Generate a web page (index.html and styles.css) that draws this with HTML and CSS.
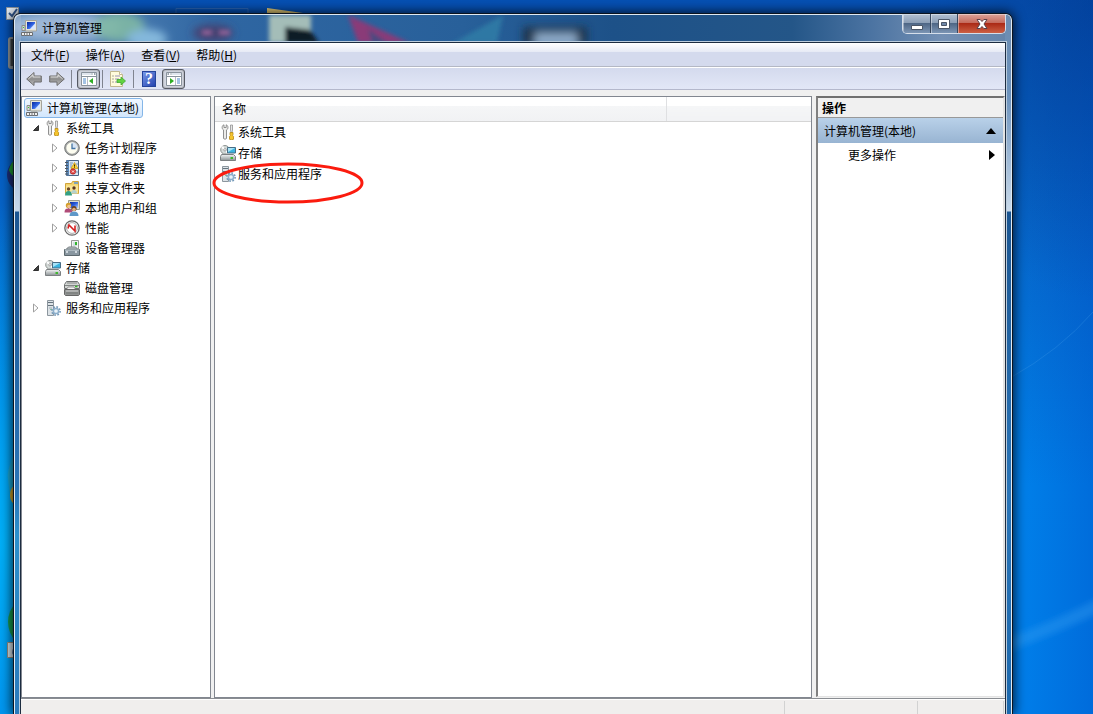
FILE: index.html
```
<!DOCTYPE html>
<html lang="zh-CN">
<head>
  <meta charset="UTF-8">
  <meta name="viewport" content="width=device-width, initial-scale=1.0">
  <title>计算机管理</title>
  <link rel="stylesheet" href="styles.css">
</head>
<body>
  <!-- Icon set, 16x16 each -->
  <svg class="sprite" aria-hidden="true">
    <defs>
      <linearGradient id="g-screen" x1="0" y1="0" x2="1" y2="1">
        <stop offset="0" stop-color="#0a2a9c"/><stop offset=".5" stop-color="#2c5fe0"/><stop offset="1" stop-color="#b8d4ff"/>
      </linearGradient>
      <linearGradient id="g-metal" x1="0" y1="0" x2="0" y2="1">
        <stop offset="0" stop-color="#f4f6f6"/><stop offset="1" stop-color="#8b9294"/>
      </linearGradient>
      <linearGradient id="g-arrow" x1="0" y1="0" x2="0" y2="1">
        <stop offset="0" stop-color="#d0d0d0"/><stop offset=".5" stop-color="#8c8c8c"/><stop offset="1" stop-color="#c4c4c4"/>
      </linearGradient>
    </defs>
    <symbol id="computer" viewBox="0 0 16 16">
      <path d="M4.500.5H15.500v10.500h-11z" fill="#e6e6dc" stroke="#a4a49c"/>
      <path d="M6 2h8v7H6z" fill="url(#g-screen)"/>
      <path d="M9 9L14 3.500V9z" fill="#d8e6ff"/>
      <path d="M1 5.500h3v5H1z" fill="#d8dad8" stroke="#8c8e8c"/>
      <path d="M2 7h1v1H2z" fill="#3ad030"/>
      <path d="M5 11.500h6" stroke="#b4b8b6" stroke-width="2"/>
      <path d="M.5 12.500h11v3H.5z" fill="#f0f0f0" stroke="#6c6e70"/>
      <path d="M3.500 13v3M6 13v3M8.500 13v3" stroke="#77797c"/>
    </symbol>
    <symbol id="tools" viewBox="0 0 16 16">
      <path d="M4 .8C1.500 1.500 1.700 5 3.500 6v8.500q1.500 1.500 3 0V6C8.500 5 8.500 1.500 6.200.8V3.500H4z" fill="#ececea" stroke="#858585" stroke-width=".9"/>
      <path d="M10.500 1h2v5l-.5 2.500h-1L10.500 6z" fill="#e6e6e6" stroke="#858585" stroke-width=".7"/>
      <path d="M10 8.500h3v2l-.5.800 1 1v3q-2 1-4 0v-3l1-1-.5-.8z" fill="#f5c42c" stroke="#b88a14" stroke-width=".8"/>
    </symbol>
    <symbol id="clock" viewBox="0 0 16 16">
      <circle cx="8" cy="8" r="7.300" fill="#a9abaa" stroke="#737675"/>
      <circle cx="8" cy="8" r="5.700" fill="#fdfdf0"/>
      <path d="M8 8h5.600A5.700 5.700 0 0 0 8 2.300z" fill="#d6e4f4"/>
      <path d="M8 3.500V8.500H11.500" fill="none" stroke="#4474a4" stroke-width="1.300"/>
    </symbol>
    <symbol id="events" viewBox="0 0 16 16">
      <path d="M2.500.5h12v15h-12z" fill="#dbe8f5" stroke="#4a6484"/>
      <path d="M2.500.5H5v15H2.500z" fill="#5c88b8"/>
      <path d="M1 2.500h3M1 5.500h3M1 8.500h3M1 11.500h3M1 14h3" stroke="#4c5660"/>
      <path d="M6 3h3M6 5h2M6 7h2M12 4h2M6 13h2M12 12h2" stroke="#7b98b6"/>
      <path d="M10.500 2.500L14 8.500H7z" fill="#ffd535" stroke="#c79512" stroke-width=".7"/>
      <path d="M10.500 4.500v2.200M10.500 7.300v.7" stroke="#403000"/>
      <circle cx="9" cy="11.500" r="2.700" fill="#e03b38" stroke="#a31616" stroke-width=".6"/>
      <path d="M8 10.500l2 2M10 10.500l-2 2" stroke="#fff" stroke-width=".9"/>
    </symbol>
    <symbol id="folder" viewBox="0 0 16 16">
      <path d="M1.500 3.500h6l1-2h6v12h-13z" fill="#f4d46c" stroke="#d0a43c"/>
      <path d="M10 3h4" stroke="#5c96d6" stroke-width="1.500"/>
      <path d="M2 5.500h12v8H2z" fill="#fae494"/>
      <circle cx="4.500" cy="9" r="1.700" fill="#6c4a28"/><path d="M1 15.500q0-4.500 3.500-4.500T8 15.500z" fill="#34a084"/>
      <circle cx="10" cy="8" r="1.700" fill="#5a3820"/><path d="M7 13.500q0-3.500 3-3.500t3 3.500z" fill="#b4d0cc"/>
    </symbol>
    <symbol id="users" viewBox="0 0 16 16">
      <path d="M4.500.5h11v9h-11z" fill="#dadbd4" stroke="#989a92"/>
      <path d="M6 2h8v6H6z" fill="url(#g-screen)"/>
      <circle cx="4.500" cy="5.500" r="2.700" fill="#d4a02c"/><circle cx="5" cy="6.500" r="1.800" fill="#f0bf90"/>
      <path d="M.5 12.500q0-4.500 4-4t4 4z" fill="#b04b78"/>
      <circle cx="10" cy="8.500" r="2.600" fill="#6a421e"/><circle cx="10" cy="9.500" r="1.800" fill="#e4ae80"/>
      <path d="M5.500 16q0-4.500 4.500-4.500T14.500 16z" fill="#5f98c8"/>
    </symbol>
    <symbol id="perf" viewBox="0 0 16 16">
      <circle cx="8" cy="8" r="7.200" fill="#fafafa" stroke="#686868" stroke-width="1.300"/>
      <circle cx="8" cy="8" r="5.400" fill="#fff" stroke="#999" stroke-width=".8"/>
      <path d="M4 8.500L5 5l6 6V5.500" fill="none" stroke="#d42020" stroke-width="1.600"/>
    </symbol>
    <symbol id="device" viewBox="0 0 16 16">
      <path d="M7.500.5h7v10h-7z" fill="#f2f4f2" stroke="#969a98"/>
      <path d="M9 2h4v4H9z" fill="#d3dde2"/><path d="M11 2h2v3h-2z" fill="#32b52c"/>
      <path d="M2.500 9l2-2h7l2 2z" fill="#c4cbce" stroke="#747c80"/>
      <path d="M.5 9.500h15v6H.5z" fill="#8896a0" stroke="#5c686e"/>
      <path d="M1 10h14" stroke="#d0dae0"/><path d="M3 11v2M12 11v2" stroke="#e4eaee" stroke-width="1.500"/>
    </symbol>
    <symbol id="storage" viewBox="0 0 16 16">
      <circle cx="5" cy="4.800" r="4.300" fill="#d4dad8" stroke="#8c9290"/>
      <path d="M5 4.800L1 3l2-2.300zM5 4.800L8.500 7 7 9z" fill="#fff"/><circle cx="5" cy="4.800" r="1.200" fill="#fff" stroke="#777" stroke-width=".6"/>
      <path d="M7.500 2.500h8v5.500h-8z" fill="#3bb4e0" stroke="#486c84"/><path d="M8 3h7L8 7z" fill="#a8e3f7"/>
      <path d="M1.500 9.500h12l2 2v4H.5v-4z" fill="url(#g-metal)" stroke="#7c8082"/>
      <path d="M10.500 12h2.500v2h-2.500z" fill="#40b830"/>
    </symbol>
    <symbol id="disk" viewBox="0 0 16 16">
      <path d="M2.500 1.500h11l2 3v4H.5v-4z" fill="#d3d6d4" stroke="#6d7070"/>
      <path d="M3 3h10M1 5.500h14" stroke="#838785"/><path d="M11 6.500h2.500" stroke="#36b428" stroke-width="1.500"/>
      <path d="M4 7h6l2 3H2z" fill="#f4f4f4" stroke="#777" stroke-width=".7"/>
      <path d="M.5 9.500h15v5l-1 1h-13l-1-1z" fill="#909392" stroke="#666"/>
      <path d="M2 11h12" stroke="#d0d0d0"/><path d="M2 13h12" stroke="#737675"/>
    </symbol>
    <symbol id="services" viewBox="0 0 16 16">
      <path d="M2.500.5h6v15h-6z" fill="#dde3e7" stroke="#8c969e"/>
      <path d="M3 2.500h5M3 5.500h5" stroke="#66737d"/><path d="M4 8h3" stroke="#a3adb5"/><path d="M5.500 9.500h1" stroke="#35a838"/>
      <circle cx="11" cy="11" r="4.100" fill="none" stroke="#7499b8" stroke-width="1.600" stroke-dasharray="1.700 1.500"/>
      <circle cx="11" cy="11" r="2.600" fill="#eaf3f9" stroke="#8caecb" stroke-width="1.500"/>
    </symbol>
    <symbol id="arrow" viewBox="0 0 16 16">
      <path d="M.7 8L8 1.500V5h7.300v6H8v3.500z" fill="url(#g-arrow)" stroke="#6c6c6c" stroke-linejoin="round"/>
      <path d="M2.300 8L7 3.800V6h7.300" fill="none" stroke="#e4e4e4" stroke-width=".8"/>
    </symbol>
    <symbol id="panel" viewBox="0 0 16 16">
      <path d="M.5 1.500h15v13H.5z" fill="#fff" stroke="#8a939d"/>
      <path d="M1 3h9" stroke="#dfe5ee" stroke-width="2"/><path d="M10.500 3h1M13 3h1.500" stroke="#7b8796" stroke-width="1.500"/>
      <path d="M1 5.500h14" stroke="#8a939d"/><path d="M6.500 6v8" stroke="#b6bcc4"/>
      <path d="M2 8h3M2 10h3M2 12h3" stroke="#4a87c9"/>
      <path d="M12 7v6l-4-3z" fill="#2fae24"/>
    </symbol>
    <symbol id="export" viewBox="0 0 16 16">
      <path d="M.5.5h9l3 3v12H.5z" fill="#fffbdc" stroke="#c2b88e"/>
      <path d="M9.500.5v3h3" fill="#fff" stroke="#c2b88e"/>
      <path d="M2.500 5h1M2.500 8h1M2.500 11h1" stroke="#555"/><path d="M5 5h5M5 8h4M5 11h3" stroke="#9a91b8"/>
      <path d="M7 8.500h4V6l4.500 4-4.500 4v-2.500H7z" fill="#63d341" stroke="#3fa830" stroke-width=".8"/>
    </symbol>
    <symbol id="closed" viewBox="0 0 8 10"><path d="M1.500 1L6 5 1.500 9z" fill="#fff" stroke="#a0a0a0"/></symbol>
    <symbol id="open" viewBox="0 0 8 10"><path d="M6.500 2.500v5h-5z" fill="#404040" stroke="#303030"/></symbol>
  </svg>

  <div class="desktop">
    <svg class="wallpaper" viewBox="0 0 1093 714" preserveAspectRatio="none" aria-hidden="true">
      <filter id="haze"><feGaussianBlur stdDeviation="3"/></filter>
      <path d="M1010 378Q1060 350 1093 312" fill="none" stroke="#3a94e4" stroke-opacity=".35"/>
      <path d="M1000 640Q1055 622 1110 592v16Q1055 634 1000 655z" fill="#39a4f4" fill-opacity=".35" filter="url(#haze)"/>
    </svg>

    <svg class="shortcuts" width="320" height="714" aria-hidden="true">
      <path d="M176 14V8.500h72V14" fill="none" stroke="#2a64b4"/>
      <path d="M267 8l36 5v3h-36z" fill="#e6cc78"/>
      <path d="M6.500 7.500h12v12h-12z" fill="#e3eaf2" stroke="#8b939b"/>
      <path d="M9 13l3 3 5-7" fill="none" stroke="#31578f" stroke-width="2"/>
      <rect x="8" y="37" width="10" height="32" rx="3" fill="#8c9396"/>
      <path d="M12 39v27" stroke="#404648" stroke-width="3"/>
      <circle cx="24" cy="175" r="17" fill="#1c2e78"/><path d="M9 170q2-9 8-11v17q-5 2-8-6z" fill="#1c9c34"/>
      <path d="M16 448q-10 25-8 30 2 28 12 34z" fill="#31a9b8" fill-opacity=".5"/><circle cx="23" cy="495" r="13" fill="#d2a42a"/>
      <circle cx="36" cy="622" r="28" fill="#169c50"/>
      <path d="M7.500 642.500h10v15h-10z" fill="#d8e4ea" stroke="#968b80"/><path d="M15 646q-4 4-2 9h3" fill="#254f90"/>
    </svg>

    <main class="window">
      <svg class="glass" width="640" height="27" aria-hidden="true">
        <filter id="soft" x="-20%" y="-50%" width="140%" height="200%"><feGaussianBlur stdDeviation="4"/></filter>
        <filter id="slight" x="-20%" y="-50%" width="140%" height="200%"><feGaussianBlur stdDeviation="2"/></filter>
        <g filter="url(#soft)">
          <ellipse cx="50" cy="12" rx="56" ry="14" fill="#b5c9e3" fill-opacity=".7"/>
          <ellipse cx="104" cy="12" rx="26" ry="15" fill="#80b8a4" fill-opacity=".9"/>
          <ellipse cx="132" cy="24" rx="20" ry="10" fill="#84b8dc"/>
          <ellipse cx="198" cy="18" rx="20" ry="8" fill="#47406e"/>
          <path d="M508 12h64v18h-64z" fill="#1c3149"/><path d="M520 18h42v14h-42z" fill="#8ba9c8"/>
        </g>
        <g filter="url(#slight)">
          <path d="M187 15h10v5h-10zM204 15h11v5h-11z" fill="#a368a0" fill-opacity=".8"/>
          <path d="M254 0h42v28h-42z" fill="#a4bdb8"/><path d="M270 12l25 3 9 13h-34z" fill="#101a26"/>
          <path d="M333 0l62 28H343z" fill="#8a3a78"/><path d="M353 14l20 14h-16z" fill="#4a4a80"/>
          <path d="M488 0l-50 28h44z" fill="#2e78a4"/>
        </g>
      </svg>

      <header class="titlebar">
        <svg class="icon"><use href="#computer"/></svg>
        <h1>计算机管理</h1>
        <div class="controls">
          <button class="min" aria-label="最小化"><svg width="14" height="12"><path d="M1.500 7.500h11v4h-11z" fill="#fff" stroke="#4b5667"/></svg></button>
          <button class="max" aria-label="最大化"><svg width="14" height="12"><path d="M1.500 1.500h11v9h-11z" fill="#fff" stroke="#4b5667"/><path d="M4.500 4.500h5v3h-5z" fill="#7088a8" stroke="#4b5667"/></svg></button>
          <button class="close" aria-label="关闭"><svg width="14" height="12"><path d="M2 1.500h3.200L7 3.500l1.800-2H12L9 6l3 4.500H8.800L7 8.500l-1.800 2H2L5 6z" fill="#fff" stroke="#5a4048"/></svg></button>
        </div>
      </header>

      <div class="client">
        <nav class="menubar">
          <button>文件(<u>F</u>)</button>
          <button>操作(<u>A</u>)</button>
          <button>查看(<u>V</u>)</button>
          <button>帮助(<u>H</u>)</button>
        </nav>

        <div class="toolbar">
          <button aria-label="后退"><svg class="icon"><use href="#arrow"/></svg></button>
          <button aria-label="前进"><svg class="icon flip"><use href="#arrow"/></svg></button>
          <span class="sep"></span>
          <button class="pressed" aria-label="显示控制台树"><svg class="icon"><use href="#panel"/></svg></button>
          <span class="sep"></span>
          <button class="export" aria-label="导出列表"><svg class="icon"><use href="#export"/></svg></button>
          <span class="sep"></span>
          <button class="help" aria-label="帮助">?</button>
          <button class="pressed" aria-label="显示操作窗格"><svg class="icon flip"><use href="#panel"/></svg></button>
        </div>

        <div class="panes">
          <section class="pane tree">
            <ul>
              <li class="root"><span class="selected"><svg class="icon"><use href="#computer"/></svg>计算机管理(本地)</span></li>
              <li><svg class="twist"><use href="#open"/></svg><svg class="icon"><use href="#tools"/></svg>系统工具</li>
              <li class="sub"><svg class="twist"><use href="#closed"/></svg><svg class="icon"><use href="#clock"/></svg>任务计划程序</li>
              <li class="sub"><svg class="twist"><use href="#closed"/></svg><svg class="icon"><use href="#events"/></svg>事件查看器</li>
              <li class="sub"><svg class="twist"><use href="#closed"/></svg><svg class="icon"><use href="#folder"/></svg>共享文件夹</li>
              <li class="sub"><svg class="twist"><use href="#closed"/></svg><svg class="icon"><use href="#users"/></svg>本地用户和组</li>
              <li class="sub"><svg class="twist"><use href="#closed"/></svg><svg class="icon"><use href="#perf"/></svg>性能</li>
              <li class="sub"><svg class="twist"></svg><svg class="icon"><use href="#device"/></svg>设备管理器</li>
              <li><svg class="twist"><use href="#open"/></svg><svg class="icon"><use href="#storage"/></svg>存储</li>
              <li class="sub"><svg class="twist"></svg><svg class="icon"><use href="#disk"/></svg>磁盘管理</li>
              <li><svg class="twist"><use href="#closed"/></svg><svg class="icon"><use href="#services"/></svg>服务和应用程序</li>
            </ul>
          </section>

          <section class="pane list">
            <table>
              <thead>
                <tr><th class="name">名称</th><th></th></tr>
              </thead>
              <tbody>
                <tr><td colspan="2"><div class="item"><svg class="icon"><use href="#tools"/></svg>系统工具</div></td></tr>
                <tr><td colspan="2"><div class="item"><svg class="icon"><use href="#storage"/></svg>存储</div></td></tr>
                <tr><td colspan="2"><div class="item"><svg class="icon"><use href="#services"/></svg>服务和应用程序</div></td></tr>
              </tbody>
            </table>
            <svg class="mark" width="154" height="44" aria-hidden="true"><ellipse cx="77" cy="22" rx="74" ry="19" fill="none" stroke="#fb1b0e" stroke-width="3"/></svg>
          </section>

          <aside class="actions">
            <h2>操作</h2>
            <button class="group">计算机管理(本地)<svg width="10" height="6"><path d="M0 6L5 0l5 6z"/></svg></button>
            <button class="more">更多操作<svg width="6" height="10"><path d="M0 0l6 5-6 5z"/></svg></button>
          </aside>
        </div>

        <footer class="status">
          <span></span><span></span><span></span>
        </footer>
      </div>
    </main>
  </div>
</body>
</html>
```

FILE: styles.css
```
* {
  box-sizing: border-box;
}

body {
  margin: 0;
  font-family: "Noto Sans CJK SC", sans-serif;
  font-size: 12px;
  line-height: 20px;
  color: #000;
}

button {
  display: flex;
  align-items: center;
  justify-content: center;
  margin: 0;
  padding: 0;
  border: 0;
  background: none;
  font: inherit;
  color: inherit;
}

svg {
  display: block;
  flex: none;
}

.sprite {
  position: absolute;
  width: 0;
  height: 0;
}

.icon {
  width: 16px;
  height: 16px;
}

.flip {
  transform: scaleX(-1);
}

/* desktop */

.desktop {
  position: relative;
  display: flex;
  height: 100vh;
  min-height: 400px;
  padding: 13px 80px 0 13px;
  overflow: hidden;
  background:
    radial-gradient(ellipse 160px 340px at 0 76%, #00b0f8, rgba(0, 160, 240, 0)),
    radial-gradient(ellipse 180px 300px at 100% 0, rgba(0, 50, 120, .4), rgba(0, 50, 120, 0)),
    linear-gradient(90deg, rgba(0, 60, 190, 0) 94%, rgba(0, 70, 190, .3)),
    linear-gradient(#0650b4, #0664c8 30%, #007ee8 68%, #007ce8);
}

.wallpaper {
  position: absolute;
  inset: 0;
  width: 100%;
  height: 100%;
}

.shortcuts {
  position: absolute;
  top: 0;
  left: 0;
}

/* window frame */

.window {
  position: relative;
  flex: 1;
  display: flex;
  flex-direction: column;
  padding: 0 6px;
  border: 1px solid #0b1420;
  border-bottom: 0;
  border-radius: 7px 7px 0 0;
  background:
    linear-gradient(#7fa0c4, #7f9ec4 80px, #c8d9ea 197px, #1c5692 198px, #2a75b8 480px, #2a90cc 520px, #2b7abc) left / 7px 100% no-repeat,
    linear-gradient(#6c8cb0, #6c92bc 80px, #c8d9ea 197px, #1c5692 198px, #2a75b8 480px, #1d69ae) right / 7px 100% no-repeat,
    linear-gradient(90deg, #6a94c0, #2f66a2 20%, #28609a 45%, #1d5188 60%, #245688 78%, #4c74a2 86%, #7490b4 93%, #6484aa);
  box-shadow: inset 1px 1px #dfe9f2, inset -1px 0 #dfe9f2, 0 0 12px 1px rgba(0, 0, 0, .8);
}

.glass {
  position: absolute;
  top: 1px;
  left: 1px;
}

.titlebar {
  position: relative;
  display: flex;
  flex: none;
  align-items: center;
  height: 28px;
  padding-left: 1px;
}

.titlebar h1 {
  flex: 1;
  margin: 0 0 0 5px;
  font-size: 12px;
  font-weight: 400;
}

.controls {
  display: flex;
  align-self: flex-start;
  height: 20px;
  border: 1px solid #d5deea;
  border-top: 0;
  border-radius: 0 0 5px 5px;
  overflow: hidden;
}

.controls button {
  background: linear-gradient(#b2c0d2, #8a9db5 48%, #4f6786 50%, #7c95b4);
  border-right: 1px solid #37485f;
  box-shadow: inset 1px 1px rgba(255, 255, 255, .4);
}

.controls .min {
  width: 28px;
}

.controls .max {
  width: 27px;
}

.controls .close {
  width: 47px;
  border: 0;
  background: linear-gradient(#dba49a, #c4685a 48%, #ab2a16 50%, #cc6044);
}

.client {
  position: relative;
  flex: 1;
  display: flex;
  flex-direction: column;
  min-height: 0;
  border: 1px solid #1c2c40;
  border-bottom: 0;
  background: #f0f0f0;
  box-shadow: 0 0 0 1px #bccddd;
}

/* menu and toolbar */

.menubar {
  display: flex;
  flex: none;
  height: 24px;
  padding-left: 2px;
  border-bottom: 1px solid #b4b8c4;
  background: linear-gradient(#fff, #e6eaf5 9px, #d4daed 9px);
}

.menubar button {
  padding: 0 8px;
}

.toolbar {
  display: flex;
  flex: none;
  align-items: center;
  gap: 5px;
  height: 23px;
  padding-left: 5px;
  border-top: 1px solid #fff;
  border-bottom: 1px solid #b4b8cc;
  background: linear-gradient(#d4daed, #e2e7f7);
}

.toolbar button:nth-child(2) {
  margin: 0 1px 0 2px;
}

.toolbar .export {
  margin-right: 2px;
}

.sep {
  width: 1px;
  height: 18px;
  background: #80848f;
}

.toolbar .pressed {
  width: 23px;
  height: 20px;
  border: 1px solid #565a64;
  border-radius: 3px;
  background: #d3d7e2;
  box-shadow: inset 0 0 2px #777;
}

.toolbar .pressed + .sep {
  margin-left: -3px;
  margin-right: 2px;
}

.toolbar .help {
  width: 14px;
  height: 16px;
  margin: 0 1px 0 3px;
  border: 1px solid #24449c;
  background: linear-gradient(135deg, #7898e8, #2544b0);
  color: #fff;
  font: bold 16px "Liberation Serif", serif;
}

/* panes */

.panes {
  flex: 1;
  display: flex;
  min-height: 0;
  padding-top: 6px;
}

.pane {
  border: 1px solid #828790;
  background: #fff;
}

.tree {
  flex: none;
  width: 190px;
}

.tree ul {
  margin: 0;
  padding: 1px 2px;
  list-style: none;
}

.tree li {
  display: flex;
  align-items: center;
  height: 20px;
  padding-left: 8px;
}

.tree li.root {
  padding-left: 0;
}

.tree li.sub {
  padding-left: 27px;
}

.tree .icon {
  margin: 0 5px;
}

.twist {
  width: 8px;
  height: 10px;
}

.selected {
  display: flex;
  align-items: center;
  padding-right: 3px;
  border: 1px solid #84b6e8;
  border-radius: 3px;
  background: linear-gradient(#f0f7ff, #d2e6fc);
  line-height: 18px;
}

.tree .selected .icon {
  margin: 0 5px 0 1px;
}

.list {
  position: relative;
  flex: 1;
  margin: 0 4px 0 3px;
}

.list table {
  width: 100%;
  border-collapse: collapse;
  table-layout: fixed;
}

.list th {
  height: 24px;
  padding: 0 7px;
  border-bottom: 1px solid #d5d5d5;
  background: linear-gradient(#fff 9px, #f5f6f7 9px, #f1f2f4);
  font-weight: 400;
  text-align: left;
}

.list th.name {
  width: 451px;
  border-right: 1px solid #dfe0e2;
}

.list td {
  height: 21px;
  padding: 0 5px;
}

.item {
  display: flex;
  align-items: center;
  gap: 2px;
}

/* hand-drawn highlight */
.mark {
  position: absolute;
  top: 64px;
  left: -4px;
}

.actions {
  flex: none;
  width: 189px;
  margin-bottom: 1px;
  border: 2px solid #707070;
  border-right-color: #e3e3e3;
  border-bottom: 1px solid #e3e3e3;
  border-left-color: #808080;
  background: #fff;
}

.actions h2 {
  height: 20px;
  margin: 0;
  padding-left: 4px;
  border-bottom: 1px solid #989898;
  background: #f0f0f0;
  font-size: 12px;
  font-weight: 700;
}

.actions button {
  justify-content: space-between;
  width: 100%;
  height: 24px;
}

.actions .group {
  height: 25px;
  padding: 0 7px 0 6px;
  background: linear-gradient(#b9d1e9, #98b4d2);
}

.actions .more {
  padding: 0 8px 0 30px;
}

/* status bar */

.status {
  display: flex;
  flex: none;
  justify-content: flex-end;
  height: 16px;
  padding-right: 1px;
  border-top: 1px solid #8a8d92;
  background: #f0eeed;
  box-shadow: inset 0 1px #fff;
}

.status span {
  width: 86px;
  margin-top: 2px;
  border-right: 1px solid #d2d2d2;
}

.status span:nth-child(2) {
  width: 133px;
}
```
